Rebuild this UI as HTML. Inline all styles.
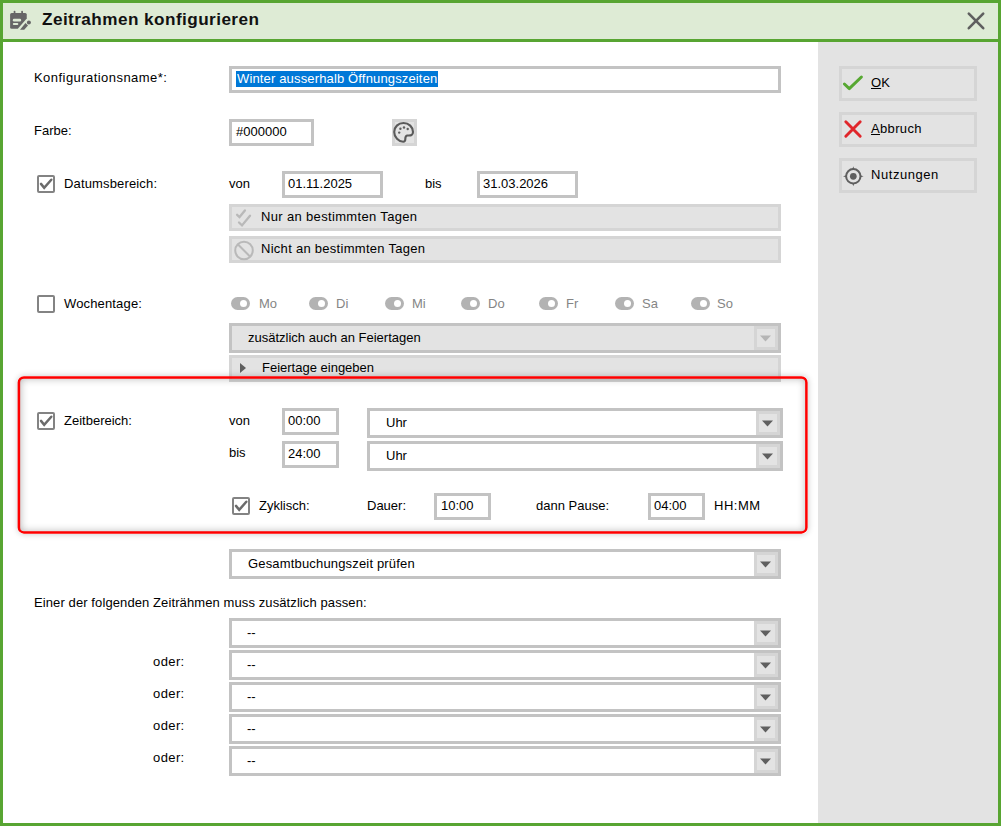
<!DOCTYPE html><html><head><meta charset="utf-8"><style>
html,body{margin:0;padding:0;}
body{width:1001px;height:826px;position:relative;overflow:hidden;background:#fff;font-family:"Liberation Sans",sans-serif;}
.t{position:absolute;font-size:13px;line-height:16px;white-space:nowrap;color:#000;}
</style></head><body>
<div style="position:absolute;left:0px;top:0px;width:1001px;height:826px;box-sizing:border-box;background:#58a532"></div>
<div style="position:absolute;left:3px;top:3px;width:995px;height:36px;box-sizing:border-box;background:#deebd5"></div>
<div style="position:absolute;left:3px;top:42px;width:815px;height:781px;box-sizing:border-box;background:#fff"></div>
<div style="position:absolute;left:818px;top:42px;width:180px;height:781px;box-sizing:border-box;background:#e3e3e3"></div>
<div class="t" style="left:42px;top:10px;font-size:15.6px;font-weight:bold;letter-spacing:0.4px;line-height:20px;color:#111;transform:scaleX(1.1);transform-origin:0 0">Zeitrahmen konfigurieren</div>
<svg style="position:absolute;left:6px;top:8px" width="28" height="26" viewBox="6 8 28 26">
<path d="M10.1 14.6 Q10.1 13 11.7 13 L25.2 13 Q26.75 13 26.75 14.6 L26.75 18.4 L17.8 28.75 L11.7 28.75 Q10.1 28.75 10.1 27.2 Z" fill="#666"/>
<rect x="13.7" y="10.8" width="1.7" height="3" rx="0.8" fill="#666"/>
<rect x="21.25" y="10.8" width="1.75" height="3" rx="0.8" fill="#666"/>
<rect x="12.8" y="18.85" width="8.3" height="2.55" rx="1.2" fill="#deebd5"/>
<rect x="12.8" y="22.9" width="5.5" height="2.2" rx="1" fill="#deebd5"/>
<path d="M20 29.7 L25.5 23.1 L28 25.6 L24.2 29.7 Z" fill="#666"/>
<circle cx="28.9" cy="22.5" r="2" fill="#666"/>
</svg>
<svg style="position:absolute;left:966px;top:11px" width="20" height="20" viewBox="0 0 20 20"><path d="M2.8 2.6 L17.2 17.2 M17.2 2.6 L2.8 17.2" stroke="#5f5f5f" stroke-width="2.6" stroke-linecap="round"/></svg>
<div style="position:absolute;left:839px;top:66px;width:138px;height:35px;box-sizing:border-box;border:3px solid #d5d5d5;background:#e3e3e3"></div>
<div class="t" style="left:871px;top:75px;"><u>O</u>K</div>
<div style="position:absolute;left:839px;top:112px;width:138px;height:35px;box-sizing:border-box;border:3px solid #d5d5d5;background:#e3e3e3"></div>
<div class="t" style="left:871px;top:121px;letter-spacing:0.35px"><u>A</u>bbruch</div>
<div style="position:absolute;left:839px;top:158px;width:138px;height:35px;box-sizing:border-box;border:3px solid #d5d5d5;background:#e3e3e3"></div>
<div class="t" style="left:871px;top:167px;letter-spacing:0.55px">Nutzungen</div>
<svg style="position:absolute;left:841px;top:74px" width="24" height="18" viewBox="0 0 24 18"><path d="M3.4 10 L8.3 14.6 L20.4 3" fill="none" stroke="#57a832" stroke-width="3" stroke-linecap="round" stroke-linejoin="round"/></svg>
<svg style="position:absolute;left:838px;top:114px" width="30" height="30" viewBox="838 114 30 30"><path d="M845.8 121.8 L860.2 136.2 M860.2 121.8 L845.8 136.2" fill="none" stroke="#e0262b" stroke-width="2.9" stroke-linecap="round"/></svg>
<svg style="position:absolute;left:838px;top:160px" width="30" height="30" viewBox="838 160 30 30"><circle cx="853.3" cy="176.3" r="7.2" fill="none" stroke="#5f5f5f" stroke-width="2"/><circle cx="853.3" cy="176.3" r="3.35" fill="#5f5f5f"/><path d="M852.2 169.5 L853.3 166.2 L854.4 169.5 Z M852.2 183.1 L853.3 186.2 L854.4 183.1 Z M846.5 175.2 L843 176.3 L846.5 177.4 Z M860.1 175.2 L863.6 176.3 L860.1 177.4 Z" fill="#5f5f5f"/></svg>
<div class="t" style="left:34px;top:70px;letter-spacing:0.45px">Konfigurationsname*:</div>
<div style="position:absolute;left:229px;top:66px;width:552px;height:27px;box-sizing:border-box;border:3px solid #c3c3c3;background:#fff"></div>
<div style="position:absolute;left:236px;top:71px;height:16px;background:#0078d7;"><span class="t" style="position:static;display:block;color:#fff;line-height:16px;padding:0 1px;letter-spacing:0.15px;height:16px;overflow:hidden">Winter ausserhalb Öffnungszeiten</span></div>
<div class="t" style="left:34px;top:123px;">Farbe:</div>
<div style="position:absolute;left:229px;top:119px;width:85px;height:27px;box-sizing:border-box;border:3px solid #c3c3c3;background:#fff"></div>
<div class="t" style="left:236px;top:124px;">#000000</div>
<div style="position:absolute;left:392px;top:119px;width:25px;height:27px;box-sizing:border-box;border:3px solid #d5d5d5;background:#e3e3e3"></div>
<svg style="position:absolute;left:392.4px;top:120.5px" width="23" height="23" viewBox="0 0 23 23">
<path d="M11.5 2 C6.2 2 2.2 6 2.2 11 C2.2 16.3 6.6 20.7 11.2 20.7 C12.6 20.7 13.3 19.8 13.3 18.3 C13.3 16.6 13.1 15.2 15.2 14.6 C16.5 14.3 18.2 14.7 19.6 14 C20.6 13.5 21 12.4 21 11 C21 6 16.8 2 11.5 2 Z" fill="none" stroke="#5a5a5a" stroke-width="2.1"/>
<circle cx="7.2" cy="11.6" r="1.2" fill="#5f5f5f"/><circle cx="8.4" cy="7.8" r="1.2" fill="#5f5f5f"/><circle cx="12" cy="6.5" r="1.2" fill="#5f5f5f"/><circle cx="15.7" cy="8" r="1.2" fill="#5f5f5f"/>
</svg>
<div style="position:absolute;left:37px;top:175px;width:18px;height:18px;box-sizing:border-box;border:2px solid #838383;border-radius:2px;background:#fff"></div>
<svg style="position:absolute;left:37px;top:175px" width="18" height="18" viewBox="0 0 18 18"><path d="M4 8.9 L7.2 12.9 L14.3 4.7" fill="none" stroke="#6b6b6b" stroke-width="2.5" stroke-linecap="round" stroke-linejoin="miter"/></svg>
<div class="t" style="left:64px;top:176px;letter-spacing:0.15px">Datumsbereich:</div>
<div class="t" style="left:229px;top:176px;">von</div>
<div style="position:absolute;left:282px;top:171px;width:101px;height:27px;box-sizing:border-box;border:3px solid #c3c3c3;background:#fff"></div>
<div class="t" style="left:288px;top:176px;">01.11.2025</div>
<div class="t" style="left:425px;top:176px;">bis</div>
<div style="position:absolute;left:477px;top:171px;width:101px;height:27px;box-sizing:border-box;border:3px solid #c3c3c3;background:#fff"></div>
<div class="t" style="left:483px;top:176px;">31.03.2026</div>
<div style="position:absolute;left:229px;top:204px;width:552px;height:27px;box-sizing:border-box;border:3px solid #d5d5d5;background:#e3e3e3"></div>
<svg style="position:absolute;left:234px;top:207px" width="20" height="22" viewBox="0 0 20 22"><path d="M3.1 7.8 L5.5 10 L10.9 3.4 M5 15.5 L8 18.4 L16 8.7" fill="none" stroke="#b9b9b9" stroke-width="2.3" stroke-linecap="round"/></svg>
<div class="t" style="left:261px;top:209px;letter-spacing:0.34px">Nur an bestimmten Tagen</div>
<div style="position:absolute;left:229px;top:236px;width:552px;height:27px;box-sizing:border-box;border:3px solid #d5d5d5;background:#e3e3e3"></div>
<svg style="position:absolute;left:233px;top:240px" width="22" height="22" viewBox="0 0 22 22"><circle cx="11" cy="10.5" r="8.8" fill="none" stroke="#b9b9b9" stroke-width="2"/><path d="M4.8 4.3 L17.2 16.7" stroke="#b9b9b9" stroke-width="2"/></svg>
<div class="t" style="left:261px;top:241px;letter-spacing:0.28px">Nicht an bestimmten Tagen</div>
<div style="position:absolute;left:37px;top:295px;width:18px;height:18px;box-sizing:border-box;border:2px solid #838383;border-radius:2px;background:#fff"></div>
<div class="t" style="left:64px;top:296px;letter-spacing:0.15px">Wochentage:</div>
<div style="position:absolute;left:231px;top:297px;width:19px;height:13px;border-radius:6.5px;background:#b3b3b3"></div>
<div style="position:absolute;left:240px;top:300px;width:7px;height:7px;border-radius:50%;background:#fff"></div>
<div class="t" style="left:259px;top:296px;color:#858585">Mo</div>
<div style="position:absolute;left:309px;top:297px;width:19px;height:13px;border-radius:6.5px;background:#b3b3b3"></div>
<div style="position:absolute;left:318px;top:300px;width:7px;height:7px;border-radius:50%;background:#fff"></div>
<div class="t" style="left:336px;top:296px;color:#858585">Di</div>
<div style="position:absolute;left:385px;top:297px;width:19px;height:13px;border-radius:6.5px;background:#b3b3b3"></div>
<div style="position:absolute;left:394px;top:300px;width:7px;height:7px;border-radius:50%;background:#fff"></div>
<div class="t" style="left:412px;top:296px;color:#858585">Mi</div>
<div style="position:absolute;left:461px;top:297px;width:19px;height:13px;border-radius:6.5px;background:#b3b3b3"></div>
<div style="position:absolute;left:470px;top:300px;width:7px;height:7px;border-radius:50%;background:#fff"></div>
<div class="t" style="left:488px;top:296px;color:#858585">Do</div>
<div style="position:absolute;left:539px;top:297px;width:19px;height:13px;border-radius:6.5px;background:#b3b3b3"></div>
<div style="position:absolute;left:548px;top:300px;width:7px;height:7px;border-radius:50%;background:#fff"></div>
<div class="t" style="left:566px;top:296px;color:#858585">Fr</div>
<div style="position:absolute;left:615px;top:297px;width:19px;height:13px;border-radius:6.5px;background:#b3b3b3"></div>
<div style="position:absolute;left:624px;top:300px;width:7px;height:7px;border-radius:50%;background:#fff"></div>
<div class="t" style="left:642px;top:296px;color:#858585">Sa</div>
<div style="position:absolute;left:691px;top:297px;width:19px;height:13px;border-radius:6.5px;background:#b3b3b3"></div>
<div style="position:absolute;left:700px;top:300px;width:7px;height:7px;border-radius:50%;background:#fff"></div>
<div class="t" style="left:717px;top:296px;color:#858585">So</div>
<div style="position:absolute;left:229px;top:323px;width:552px;height:30px;box-sizing:border-box;border:3px solid #c3c3c3;background:#e3e3e3"></div>
<div class="t" style="left:248px;top:330px;color:#000;">zusätzlich auch an Feiertagen</div>
<div style="position:absolute;left:754px;top:326px;width:24px;height:24px;box-sizing:border-box;border:3px solid #d5d5d5;background:#e3e3e3"></div>
<svg style="position:absolute;left:760.0px;top:334.5px" width="11" height="7" viewBox="0 0 11 7"><path d="M0 0.5 L11 0.5 L5.5 6.5 Z" fill="#b5b5b5"/></svg>
<div style="position:absolute;left:229px;top:355px;width:552px;height:27px;box-sizing:border-box;border:3px solid #d5d5d5;background:#e3e3e3"></div>
<svg style="position:absolute;left:239px;top:362px" width="8" height="12" viewBox="0 0 8 12"><path d="M1 1 L7 6 L1 11 Z" fill="#5f5f5f"/></svg>
<div class="t" style="left:262px;top:360px;">Feiertage eingeben</div>
<div style="position:absolute;left:18px;top:376px;width:790px;height:158px;box-sizing:border-box;border:2px solid transparent;border-radius:6px;box-shadow:0 0 6px rgba(0,0,0,0.22), inset 0 0 8px rgba(0,0,0,0.32);"></div>
<svg style="position:absolute;left:0;top:0" width="1001" height="826" viewBox="0 0 1001 826"><rect x="18.9" y="377.4" width="787.5" height="155" rx="5" ry="5" fill="none" stroke="#ff0000" stroke-width="2.5"/></svg>
<div style="position:absolute;left:37px;top:412px;width:18px;height:18px;box-sizing:border-box;border:2px solid #838383;border-radius:2px;background:#fff"></div>
<svg style="position:absolute;left:37px;top:412px" width="18" height="18" viewBox="0 0 18 18"><path d="M4 8.9 L7.2 12.9 L14.3 4.7" fill="none" stroke="#6b6b6b" stroke-width="2.5" stroke-linecap="round" stroke-linejoin="miter"/></svg>
<div class="t" style="left:64px;top:413px;">Zeitbereich:</div>
<div class="t" style="left:229px;top:413px;">von</div>
<div style="position:absolute;left:282px;top:408px;width:57px;height:27px;box-sizing:border-box;border:3px solid #c3c3c3;background:#fff"></div>
<div class="t" style="left:288px;top:413px;">00:00</div>
<div style="position:absolute;left:367px;top:408px;width:416px;height:30px;box-sizing:border-box;border:3px solid #c3c3c3;background:#fff"></div>
<div class="t" style="left:386px;top:415px;color:#000;">Uhr</div>
<div style="position:absolute;left:756px;top:411px;width:24px;height:24px;box-sizing:border-box;border:3px solid #d5d5d5;background:#e3e3e3"></div>
<svg style="position:absolute;left:762.0px;top:419.5px" width="11" height="7" viewBox="0 0 11 7"><path d="M0 0.5 L11 0.5 L5.5 6.5 Z" fill="#5f5f5f"/></svg>
<div class="t" style="left:229px;top:445px;">bis</div>
<div style="position:absolute;left:282px;top:441px;width:57px;height:27px;box-sizing:border-box;border:3px solid #c3c3c3;background:#fff"></div>
<div class="t" style="left:288px;top:446px;">24:00</div>
<div style="position:absolute;left:367px;top:441px;width:416px;height:30px;box-sizing:border-box;border:3px solid #c3c3c3;background:#fff"></div>
<div class="t" style="left:386px;top:448px;color:#000;">Uhr</div>
<div style="position:absolute;left:756px;top:444px;width:24px;height:24px;box-sizing:border-box;border:3px solid #d5d5d5;background:#e3e3e3"></div>
<svg style="position:absolute;left:762.0px;top:452.5px" width="11" height="7" viewBox="0 0 11 7"><path d="M0 0.5 L11 0.5 L5.5 6.5 Z" fill="#5f5f5f"/></svg>
<div style="position:absolute;left:232px;top:497px;width:18px;height:18px;box-sizing:border-box;border:2px solid #838383;border-radius:2px;background:#fff"></div>
<svg style="position:absolute;left:232px;top:497px" width="18" height="18" viewBox="0 0 18 18"><path d="M4 8.9 L7.2 12.9 L14.3 4.7" fill="none" stroke="#6b6b6b" stroke-width="2.5" stroke-linecap="round" stroke-linejoin="miter"/></svg>
<div class="t" style="left:259px;top:498px;">Zyklisch:</div>
<div class="t" style="left:367px;top:498px;">Dauer:</div>
<div style="position:absolute;left:434px;top:493px;width:57px;height:27px;box-sizing:border-box;border:3px solid #c3c3c3;background:#fff"></div>
<div class="t" style="left:441px;top:498px;">10:00</div>
<div class="t" style="left:536px;top:498px;">dann Pause:</div>
<div style="position:absolute;left:648px;top:493px;width:57px;height:27px;box-sizing:border-box;border:3px solid #c3c3c3;background:#fff"></div>
<div class="t" style="left:654px;top:498px;">04:00</div>
<div class="t" style="left:714px;top:498px;letter-spacing:0.5px">HH:MM</div>
<div style="position:absolute;left:229px;top:549px;width:552px;height:30px;box-sizing:border-box;border:3px solid #c3c3c3;background:#fff"></div>
<div class="t" style="left:248px;top:556px;color:#000;letter-spacing:0.17px">Gesamtbuchungszeit prüfen</div>
<div style="position:absolute;left:754px;top:552px;width:24px;height:24px;box-sizing:border-box;border:3px solid #d5d5d5;background:#e3e3e3"></div>
<svg style="position:absolute;left:760.0px;top:560.5px" width="11" height="7" viewBox="0 0 11 7"><path d="M0 0.5 L11 0.5 L5.5 6.5 Z" fill="#5f5f5f"/></svg>
<div class="t" style="left:34px;top:595px;letter-spacing:0.1px">Einer der folgenden Zeiträhmen muss zusätzlich passen:</div>
<div style="position:absolute;left:229px;top:618px;width:552px;height:30px;box-sizing:border-box;border:3px solid #c3c3c3;background:#fff"></div>
<div class="t" style="left:247px;top:625px;color:#000;">--</div>
<div style="position:absolute;left:754px;top:621px;width:24px;height:24px;box-sizing:border-box;border:3px solid #d5d5d5;background:#e3e3e3"></div>
<svg style="position:absolute;left:760.0px;top:629.5px" width="11" height="7" viewBox="0 0 11 7"><path d="M0 0.5 L11 0.5 L5.5 6.5 Z" fill="#5f5f5f"/></svg>
<div style="position:absolute;left:229px;top:650px;width:552px;height:30px;box-sizing:border-box;border:3px solid #c3c3c3;background:#fff"></div>
<div class="t" style="left:247px;top:657px;color:#000;">--</div>
<div style="position:absolute;left:754px;top:653px;width:24px;height:24px;box-sizing:border-box;border:3px solid #d5d5d5;background:#e3e3e3"></div>
<svg style="position:absolute;left:760.0px;top:661.5px" width="11" height="7" viewBox="0 0 11 7"><path d="M0 0.5 L11 0.5 L5.5 6.5 Z" fill="#5f5f5f"/></svg>
<div class="t" style="left:153px;top:654px;letter-spacing:0.4px">oder:</div>
<div style="position:absolute;left:229px;top:682px;width:552px;height:30px;box-sizing:border-box;border:3px solid #c3c3c3;background:#fff"></div>
<div class="t" style="left:247px;top:689px;color:#000;">--</div>
<div style="position:absolute;left:754px;top:685px;width:24px;height:24px;box-sizing:border-box;border:3px solid #d5d5d5;background:#e3e3e3"></div>
<svg style="position:absolute;left:760.0px;top:693.5px" width="11" height="7" viewBox="0 0 11 7"><path d="M0 0.5 L11 0.5 L5.5 6.5 Z" fill="#5f5f5f"/></svg>
<div class="t" style="left:153px;top:686px;letter-spacing:0.4px">oder:</div>
<div style="position:absolute;left:229px;top:714px;width:552px;height:30px;box-sizing:border-box;border:3px solid #c3c3c3;background:#fff"></div>
<div class="t" style="left:247px;top:721px;color:#000;">--</div>
<div style="position:absolute;left:754px;top:717px;width:24px;height:24px;box-sizing:border-box;border:3px solid #d5d5d5;background:#e3e3e3"></div>
<svg style="position:absolute;left:760.0px;top:725.5px" width="11" height="7" viewBox="0 0 11 7"><path d="M0 0.5 L11 0.5 L5.5 6.5 Z" fill="#5f5f5f"/></svg>
<div class="t" style="left:153px;top:718px;letter-spacing:0.4px">oder:</div>
<div style="position:absolute;left:229px;top:746px;width:552px;height:30px;box-sizing:border-box;border:3px solid #c3c3c3;background:#fff"></div>
<div class="t" style="left:247px;top:753px;color:#000;">--</div>
<div style="position:absolute;left:754px;top:749px;width:24px;height:24px;box-sizing:border-box;border:3px solid #d5d5d5;background:#e3e3e3"></div>
<svg style="position:absolute;left:760.0px;top:757.5px" width="11" height="7" viewBox="0 0 11 7"><path d="M0 0.5 L11 0.5 L5.5 6.5 Z" fill="#5f5f5f"/></svg>
<div class="t" style="left:153px;top:750px;letter-spacing:0.4px">oder:</div>
</body></html>
